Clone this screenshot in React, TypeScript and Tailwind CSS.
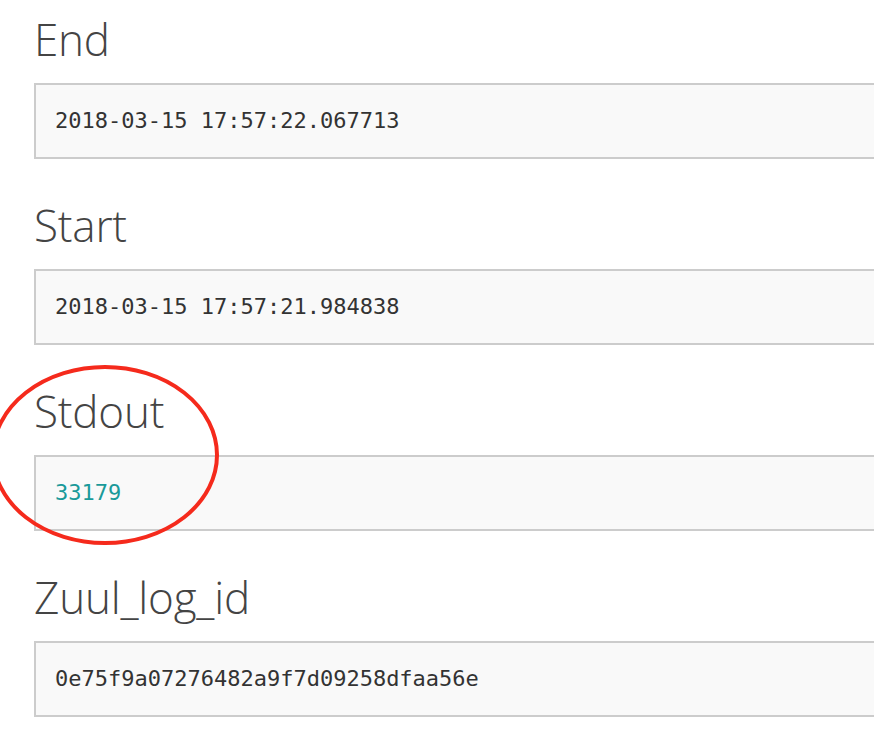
import React from "react";

const rows: { label: string; value: string; teal?: boolean }[] = [
  { label: "End", value: "2018-03-15 17:57:22.067713" },
  { label: "Start", value: "2018-03-15 17:57:21.984838" },
  { label: "Stdout", value: "33179", teal: true },
  { label: "Zuul_log_id", value: "0e75f9a07276482a9f7d09258dfaa56e" },
];

export default function App() {
  return (
    <div className="relative w-[874px] h-[730px] overflow-hidden bg-white">
      <div className="pt-[14px] pl-[34px] flex flex-col gap-[41px]">
        {rows.map((r) => (
          <div key={r.label} className="flex flex-col">
            <h2
              className="h-[50px] leading-[50px] text-[44px] font-light text-[#444444] whitespace-nowrap tracking-[-0.2px]"
              style={{ fontFamily: '"Open Sans", sans-serif' }}
            >
              {r.label}
            </h2>
            <div className="mt-[19px] h-[76px] w-[880px] border-2 border-[#cccccc] bg-[#f9f9f9] flex items-center pl-[19px]">
              <span
                className={
                  "text-[22px] leading-none " +
                  (r.teal ? "text-[#1a9a9a]" : "text-[#333333]")
                }
                style={{ fontFamily: '"DejaVu Sans Mono", monospace' }}
              >
                {r.value}
              </span>
            </div>
          </div>
        ))}
      </div>
      <svg
        className="absolute left-0 top-0 pointer-events-none"
        width="874"
        height="730"
        viewBox="0 0 874 730"
      >
        <ellipse
          cx="105"
          cy="455"
          rx="112"
          ry="88"
          fill="none"
          stroke="#f52a1c"
          strokeWidth="4"
        />
      </svg>
    </div>
  );
}
